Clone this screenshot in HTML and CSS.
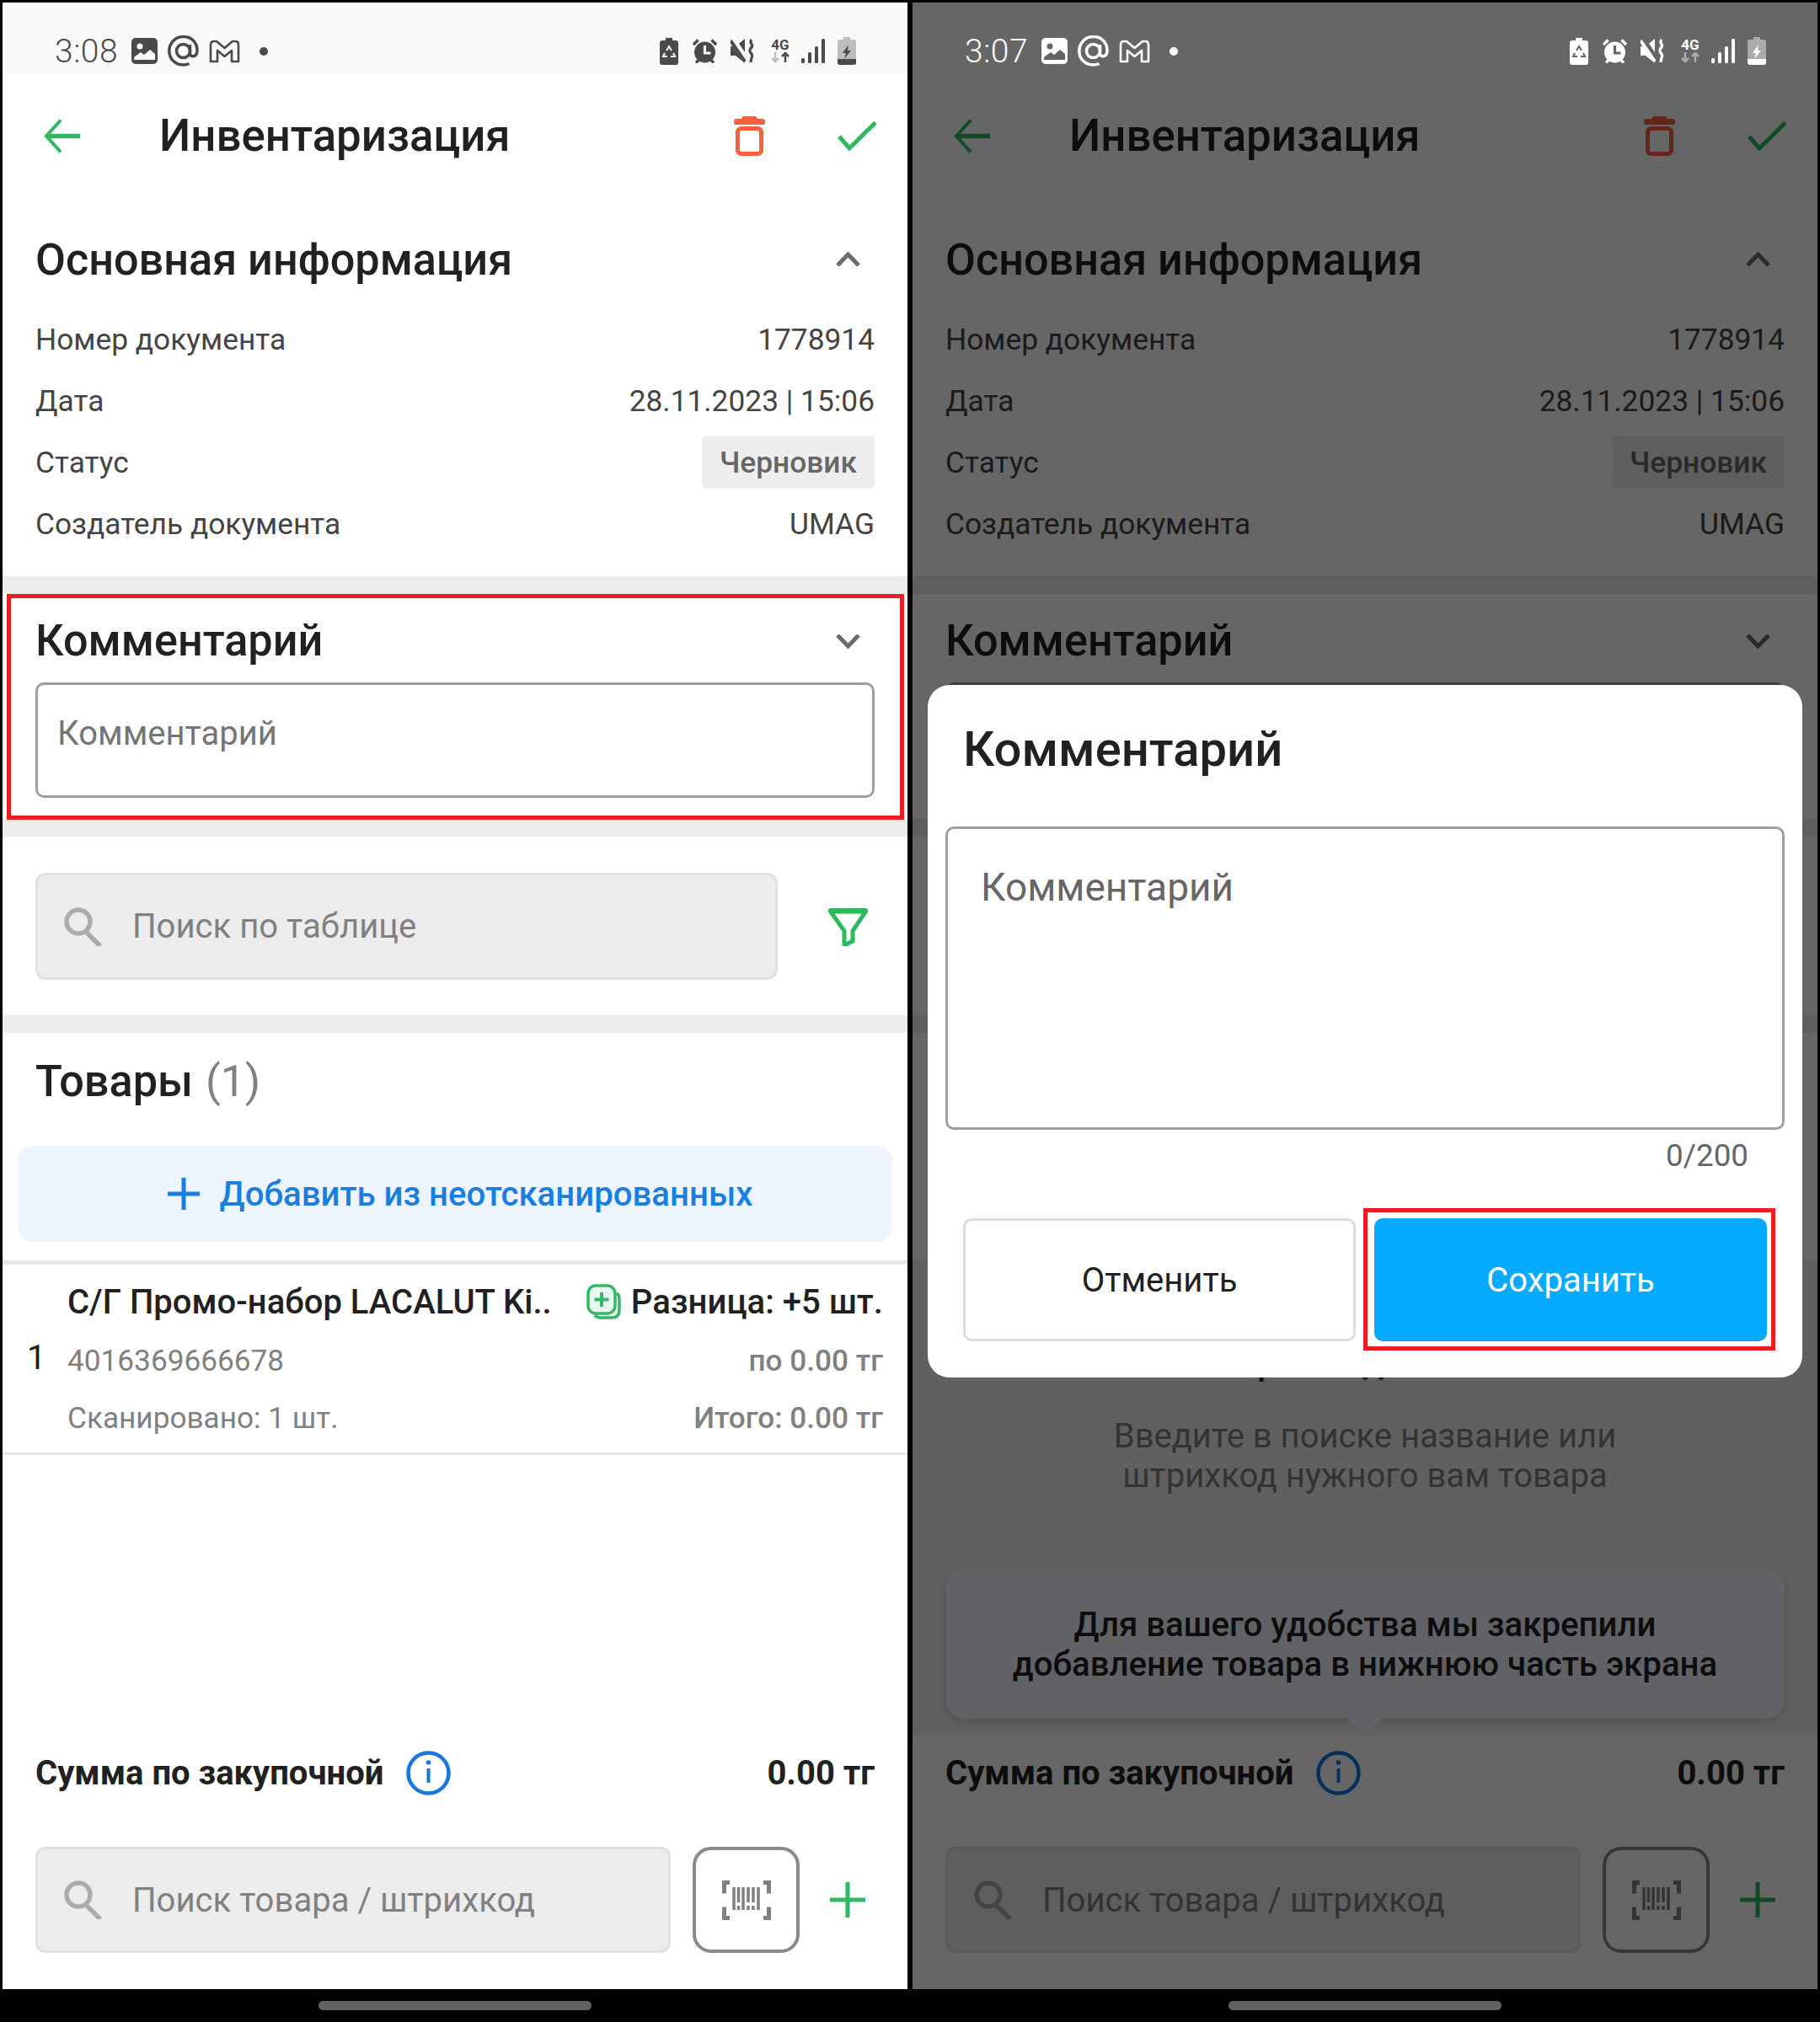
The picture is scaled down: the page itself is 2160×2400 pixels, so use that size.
FILE: index.html
```html
<!DOCTYPE html>
<html lang="ru">
<head>
<meta charset="utf-8">
<title>Инвентаризация</title>
<link rel="stylesheet" href="styles.css">
</head>
<body>
<main class="screens">

<section class="phone-wrap">
<div class="phone">
  <div class="status">
    <span class="time">3:08</span>
    <svg class="si" width="31" height="31" viewBox="0 0 31 31"><rect width="31" height="31" rx="5" fill="currentColor"/><circle cx="10" cy="10" r="3.5" fill="#fafafa"/><path d="M3 26v-3l8-6 4 3 7-6 6 5v7z" fill="#fafafa"/></svg>
    <svg class="si" width="37" height="37" viewBox="0 0 37 37" fill="none" stroke="currentColor" stroke-width="3.5"><circle cx="18.500" cy="18.500" r="8"/><path d="M26.500 11v10c0 6 8.500 5 8.500-3 0-10-7-16.500-16.500-16.500S1.800 9 1.800 18.500 9 35 18.500 35c3 0 5-.5 7-1.500"/></svg>
    <svg class="si" width="37" height="28" viewBox="0 0 37 28" fill="none" stroke="currentColor" stroke-width="2.600" stroke-linejoin="round"><path d="M2 6q0-4 4-4h3l9.500 8L28 2h3q4 0 4 4v20h-8V13l-8.500 7L10 13v13H2z"/></svg>
    <span class="sdot"></span>
    <div class="status-right">
      <svg width="22" height="32" viewBox="0 0 22 32"><path d="M7 0h8v3h4a3 3 0 0 1 3 3v23a3 3 0 0 1-3 3H3a3 3 0 0 1-3-3V6a3 3 0 0 1 3-3h4z" fill="currentColor"/><path d="M8 15l3-5 3 5M16 18l2 4h-5M9 22H4l2-4" fill="none" stroke="#fafafa" stroke-width="2"/></svg>
      <svg width="29" height="29" viewBox="0 0 29 29"><circle cx="14.500" cy="16" r="12.500" fill="currentColor"/><path d="M14.500 8v9h7" fill="none" stroke="#fafafa" stroke-width="3.200"/><path d="M1 7l5.500-5.500M28 7l-5.500-5.500M4 28.500l4-4M25 28.500l-4-4" stroke="currentColor" stroke-width="3.500"/></svg>
      <svg width="29" height="29" viewBox="0 0 29 29"><path d="M0 9h6L17 0v29L6 20H0z" fill="currentColor"/><path d="M2 1l17 25" stroke="#fafafa" stroke-width="8"/><path d="M0 2l17 25" stroke="currentColor" stroke-width="4"/><path d="M25 1c-4 4 3 6 0 9s-3 5 0 8c2 3-1 5-1 10" fill="none" stroke="currentColor" stroke-width="3.200"/></svg>
      <div class="net-icon"><span class="net">4G</span><svg width="24" height="15" viewBox="0 0 24 15"><path d="M6 2v11M2 9l4 4 4-4" fill="none" stroke="currentColor" stroke-opacity=".35" stroke-width="2.500"/><path d="M18 14V3M14 7l4-4 4 4" fill="none" stroke="currentColor" stroke-width="2.500"/></svg></div>
      <svg width="28" height="29" viewBox="0 0 28 29" fill="currentColor"><rect y="23" width="4" height="6" rx="1.500"/><rect x="8" y="16" width="4" height="13" rx="1.500"/><rect x="16" y="9" width="4" height="20" rx="1.500"/><rect x="24" width="4" height="29" rx="1.500"/></svg>
      <svg width="22" height="33" viewBox="0 0 22 33"><path d="M7 0h8v3h4a3 3 0 0 1 3 3v24a3 3 0 0 1-3 3H3a3 3 0 0 1-3-3V6a3 3 0 0 1 3-3h4z" fill="currentColor" fill-opacity=".35"/><path d="M0 26h22v4a3 3 0 0 1-3 3H3a3 3 0 0 1-3-3z" fill="currentColor"/><path d="M13 9L6 19h4l-2 7 8-10h-4z" fill="currentColor"/></svg>
    </div>
  </div>

  <header class="topbar">
    <svg class="back" width="43" height="41" viewBox="0 0 43 41" fill="none" stroke="#2dba5f"><path d="M4 20.500h39" stroke-width="5.500"/><path d="M20 1.500L3 20.500l17 19" stroke-width="4"/></svg>
    <h1 class="title">Инвентаризация</h1>
    <svg class="trash" width="37" height="47" viewBox="0 0 37 47" fill="#f85f3f"><path d="M11 0h15l2 3h6q3 0 3 3v2q0 2-2 2H2q-2 0-2-2V6q0-3 3-3h6z"/><rect x="4.500" y="14.500" width="28" height="30" rx="4" fill="none" stroke="#f85f3f" stroke-width="5"/></svg>
    <svg class="check" width="46" height="35" viewBox="0 0 46 35" fill="none" stroke="#2dba5f" stroke-width="5"><path d="M2 18l12 14L45 1.500"/></svg>
  </header>

  <section class="block block-info">
    <div class="block-head"><h2 class="h2">Основная информация</h2><svg class="chev chev-up" width="29" height="17" viewBox="0 0 29 17" fill="none" stroke="#6b6b6b" stroke-width="5"><path d="M2 16L14.500 3 27 16"/></svg></div>
    <div class="row"><span>Номер документа</span><span>1778914</span></div>
    <div class="row"><span>Дата</span><span>28.11.2023 | 15:06</span></div>
    <div class="row"><span>Статус</span><span class="chip">Черновик</span></div>
    <div class="row"><span>Создатель документа</span><span>UMAG</span></div>
  </section>
  <div class="band"></div>

  <section class="block block-comment">
    <div class="block-head block-head-c"><h2 class="h2">Комментарий</h2><svg class="chev" width="29" height="17" viewBox="0 0 29 17" fill="none" stroke="#6b6b6b" stroke-width="5"><path d="M2 1l12.500 13L27 1"/></svg></div>
    <div class="comment-input">Комментарий</div>
    <div class="mark mark-comment"></div>
  </section>
  <div class="band"></div>

  <section class="block block-search">
    <div class="search search-wide">
      <svg class="mag" width="46" height="46" viewBox="0 0 46 46" fill="none" stroke="#ababab" stroke-width="5.500"><circle cx="17" cy="17" r="14"/><path d="M26 29l17 17"/></svg>
      <span>Поиск по таблице</span>
    </div>
    <svg class="filter" width="47" height="45" viewBox="0 0 47 45" fill="none" stroke="#2dba5f" stroke-width="5" stroke-linejoin="round"><path d="M2 3h43L29 27v12l-10 5V27z"/><path d="M2 3h43" stroke-width="7"/></svg>
  </section>
  <div class="band"></div>

  <section class="goods">
    <h2 class="goods-title">Товары <span class="muted">(1)</span></h2>
    <div class="add-btn"><svg width="38" height="38" viewBox="0 0 38 38" stroke="#1a7de0" stroke-width="5"><path d="M19 0v38M0 19h38"/></svg><span>Добавить из неотсканированных</span></div>
  </section>
  <div class="line line-top"></div>

  <article class="item">
    <span class="num">1</span>
    <span class="name">С/Г Промо-набор LACALUT Ki..</span>
    <span class="diff"><svg width="41" height="42" viewBox="0 0 41 42" fill="none" stroke="#34b868" stroke-width="3.500"><path d="M10 37q2 3 7 3h13q9 0 9-9V18q0-5-3-7"/><rect x="2" y="2" width="32" height="33" rx="9" fill="#e8f8ef"/><path d="M18 10v17M9.500 18.500h17" stroke-width="4"/></svg>Разница: +5 шт.</span>
    <span class="sub">4016369666678</span>
    <span class="sub sub-strong">по 0.00 тг</span>
    <span class="sub">Сканировано: 1 шт.</span>
    <span class="sub sub-strong">Итого: 0.00 тг</span>
  </article>
  <div class="line"></div>

  <div class="spacer"></div>

  <footer class="bottom">
    <div class="sum"><span class="sum-label">Сумма по закупочной</span><svg class="info" width="53" height="53" viewBox="0 0 53 53" fill="none" stroke="#1677e0"><circle cx="26.500" cy="26.500" r="24" stroke-width="4.500"/><circle cx="26.500" cy="14" r="2.800" fill="#1677e0" stroke="none"/><path d="M26.500 21v17" stroke-width="4"/></svg><span class="sum-value">0.00 тг</span></div>
    <div class="tools">
      <div class="search search-bottom">
        <svg class="mag" width="46" height="46" viewBox="0 0 46 46" fill="none" stroke="#ababab" stroke-width="5.500"><circle cx="17" cy="17" r="14"/><path d="M26 29l17 17"/></svg>
        <span>Поиск товара / штрихкод</span>
      </div>
      <div class="scan"><svg width="58" height="47" viewBox="0 0 58 47" fill="none" stroke="#808080"><path d="M9 2.500H2.500v13M49 2.500h6.500v13M9 44.500H2.500v-13M49 44.500h6.500v-13" stroke-width="5"/><path d="M14 8v27M19.500 8v18M19.500 30v5M25 8v27M31 8v18M31 30v5M37 8v18M37 30v5M43 8v27" stroke-width="3.500"/></svg></div>
      <svg class="plus" width="42" height="42" viewBox="0 0 42 42" stroke="#2dba5f" stroke-width="5"><path d="M21 0v42M0 21h42"/></svg>
    </div>
  </footer>
</div>
</section>

<section class="phone-wrap">
<div class="phone phone-dim">
  <div class="status">
    <span class="time">3:07</span>
    <svg class="si" width="31" height="31" viewBox="0 0 31 31"><rect width="31" height="31" rx="5" fill="currentColor"/><circle cx="10" cy="10" r="3.500" fill="#646464"/><path d="M3 26v-3l8-6 4 3 7-6 6 5v7z" fill="#646464"/></svg>
    <svg class="si" width="37" height="37" viewBox="0 0 37 37" fill="none" stroke="currentColor" stroke-width="3.500"><circle cx="18.500" cy="18.500" r="8"/><path d="M26.500 11v10c0 6 8.500 5 8.500-3 0-10-7-16.500-16.500-16.500S1.800 9 1.800 18.500 9 35 18.500 35c3 0 5-.5 7-1.500"/></svg>
    <svg class="si" width="37" height="28" viewBox="0 0 37 28" fill="none" stroke="currentColor" stroke-width="2.600" stroke-linejoin="round"><path d="M2 6q0-4 4-4h3l9.500 8L28 2h3q4 0 4 4v20h-8V13l-8.500 7L10 13v13H2z"/></svg>
    <span class="sdot"></span>
    <div class="status-right">
      <svg width="22" height="32" viewBox="0 0 22 32"><path d="M7 0h8v3h4a3 3 0 0 1 3 3v23a3 3 0 0 1-3 3H3a3 3 0 0 1-3-3V6a3 3 0 0 1 3-3h4z" fill="currentColor"/><path d="M8 15l3-5 3 5M16 18l2 4h-5M9 22H4l2-4" fill="none" stroke="#646464" stroke-width="2"/></svg>
      <svg width="29" height="29" viewBox="0 0 29 29"><circle cx="14.500" cy="16" r="12.500" fill="currentColor"/><path d="M14.500 8v9h7" fill="none" stroke="#646464" stroke-width="3.200"/><path d="M1 7l5.500-5.500M28 7l-5.500-5.500M4 28.500l4-4M25 28.500l-4-4" stroke="currentColor" stroke-width="3.500"/></svg>
      <svg width="29" height="29" viewBox="0 0 29 29"><path d="M0 9h6L17 0v29L6 20H0z" fill="currentColor"/><path d="M2 1l17 25" stroke="#646464" stroke-width="8"/><path d="M0 2l17 25" stroke="currentColor" stroke-width="4"/><path d="M25 1c-4 4 3 6 0 9s-3 5 0 8c2 3-1 5-1 10" fill="none" stroke="currentColor" stroke-width="3.200"/></svg>
      <div class="net-icon"><span class="net">4G</span><svg width="24" height="15" viewBox="0 0 24 15"><path d="M6 2v11M2 9l4 4 4-4" fill="none" stroke="currentColor" stroke-opacity=".45" stroke-width="2.500"/><path d="M18 14V3M14 7l4-4 4 4" fill="none" stroke="currentColor" stroke-opacity=".45" stroke-width="2.500"/></svg></div>
      <svg width="28" height="29" viewBox="0 0 28 29" fill="currentColor"><rect y="23" width="4" height="6" rx="1.500"/><rect x="8" y="16" width="4" height="13" rx="1.500"/><rect x="16" y="9" width="4" height="20" rx="1.500"/><rect x="24" width="4" height="29" rx="1.500"/></svg>
      <svg width="22" height="33" viewBox="0 0 22 33"><path d="M7 0h8v3h4a3 3 0 0 1 3 3v24a3 3 0 0 1-3 3H3a3 3 0 0 1-3-3V6a3 3 0 0 1 3-3h4z" fill="currentColor" fill-opacity=".45"/><path d="M0 26h22v4a3 3 0 0 1-3 3H3a3 3 0 0 1-3-3z" fill="currentColor"/><path d="M13 9L6 19h4l-2 7 8-10h-4z" fill="#fff"/></svg>
    </div>
  </div>

  <header class="topbar">
    <svg class="back" width="43" height="41" viewBox="0 0 43 41" fill="none" stroke="#2dba5f"><path d="M4 20.500h39" stroke-width="5.500"/><path d="M20 1.500L3 20.500l17 19" stroke-width="4"/></svg>
    <h1 class="title">Инвентаризация</h1>
    <svg class="trash" width="37" height="47" viewBox="0 0 37 47" fill="#f85f3f"><path d="M11 0h15l2 3h6q3 0 3 3v2q0 2-2 2H2q-2 0-2-2V6q0-3 3-3h6z"/><rect x="4.500" y="14.500" width="28" height="30" rx="4" fill="none" stroke="#f85f3f" stroke-width="5"/></svg>
    <svg class="check" width="46" height="35" viewBox="0 0 46 35" fill="none" stroke="#2dba5f" stroke-width="5"><path d="M2 18l12 14L45 1.500"/></svg>
  </header>

  <section class="block block-info">
    <div class="block-head"><h2 class="h2">Основная информация</h2><svg class="chev chev-up" width="29" height="17" viewBox="0 0 29 17" fill="none" stroke="#6b6b6b" stroke-width="5"><path d="M2 16L14.500 3 27 16"/></svg></div>
    <div class="row"><span>Номер документа</span><span>1778914</span></div>
    <div class="row"><span>Дата</span><span>28.11.2023 | 15:06</span></div>
    <div class="row"><span>Статус</span><span class="chip">Черновик</span></div>
    <div class="row"><span>Создатель документа</span><span>UMAG</span></div>
  </section>
  <div class="band"></div>

  <section class="block block-comment">
    <div class="block-head block-head-c"><h2 class="h2">Комментарий</h2><svg class="chev" width="29" height="17" viewBox="0 0 29 17" fill="none" stroke="#6b6b6b" stroke-width="5"><path d="M2 1l12.500 13L27 1"/></svg></div>
    <div class="comment-input"></div>
  </section>
  <div class="band"></div>

  <section class="block block-search"></section>
  <div class="band"></div>

  <section class="goods"></section>

  <div class="empty">
    <h3 class="empty-title">Товары не добавлены</h3>
    <p class="empty-text">Введите в поиске название или<br>штрихкод нужного вам товара</p>
    <div class="tip">Для вашего удобства мы закрепили<br>добавление товара в нижнюю часть экрана</div>
  </div>

  <footer class="bottom">
    <div class="sum"><span class="sum-label">Сумма по закупочной</span><svg class="info" width="53" height="53" viewBox="0 0 53 53" fill="none" stroke="#1677e0"><circle cx="26.500" cy="26.500" r="24" stroke-width="4.500"/><circle cx="26.500" cy="14" r="2.800" fill="#1677e0" stroke="none"/><path d="M26.500 21v17" stroke-width="4"/></svg><span class="sum-value">0.00 тг</span></div>
    <div class="tools">
      <div class="search search-bottom">
        <svg class="mag" width="46" height="46" viewBox="0 0 46 46" fill="none" stroke="#ababab" stroke-width="5.500"><circle cx="17" cy="17" r="14"/><path d="M26 29l17 17"/></svg>
        <span>Поиск товара / штрихкод</span>
      </div>
      <div class="scan"><svg width="58" height="47" viewBox="0 0 58 47" fill="none" stroke="#808080"><path d="M9 2.500H2.500v13M49 2.500h6.500v13M9 44.500H2.500v-13M49 44.500h6.500v-13" stroke-width="5"/><path d="M14 8v27M19.500 8v18M19.500 30v5M25 8v27M31 8v18M31 30v5M37 8v18M37 30v5M43 8v27" stroke-width="3.500"/></svg></div>
      <svg class="plus" width="42" height="42" viewBox="0 0 42 42" stroke="#2dba5f" stroke-width="5"><path d="M21 0v42M0 21h42"/></svg>
    </div>
  </footer>

  <div class="scrim"></div>

  <div class="modal">
    <h2 class="modal-title">Комментарий</h2>
    <div class="modal-input">Комментарий</div>
    <div class="counter">0/200</div>
    <div class="modal-actions">
      <div class="btn btn-cancel">Отменить</div>
      <div class="btn btn-save">Сохранить<span class="mark mark-save"></span></div>
    </div>
  </div>
</div>
</section>

</main>
<div class="navs"><span class="pill"></span><span class="pill"></span></div>
</body>
</html>
```

FILE: styles.css
```css
* { box-sizing: border-box; }
html, body { margin: 0; padding: 0; }
body {
  width: 2160px;
  height: 2400px;
  background: #000;
  font-family: Roboto, "Noto Sans", sans-serif;
  color: #212121;
  overflow: hidden;
}
.screens {
  display: grid;
  grid-template-columns: 1074px 1074px;
  gap: 6px;
  padding: 3px 3px 0;
}
.phone {
  position: relative;
  height: 2358px;
  background: #fff;
  display: flex;
  flex-direction: column;
  overflow: hidden;
}
h1, h2, h3, p { margin: 0; }

/* status bar */
.status {
  flex: none;
  height: 85px;
  background: #fafafa;
  color: #4a4a4a;
  display: flex;
  align-items: center;
  padding: 30px 61px 0 62px;
  gap: 12px;
}
.time { font-size: 39px; font-weight: 300; letter-spacing: 0.5px; margin-right: 4px; color: #4a4a4a; }
.si { flex: none; }
.sdot { width: 10px; height: 10px; border-radius: 50%; background: currentColor; margin-left: 11px; }
.status-right { margin-left: auto; display: flex; align-items: center; }
.status-right > :nth-child(2) { margin-left: 17px; }
.status-right > :nth-child(3) { margin-left: 16px; }
.status-right > :nth-child(4) { margin-left: 18px; }
.status-right > :nth-child(5) { margin-left: 13px; }
.status-right > :nth-child(6) { margin-left: 15px; }
.net-icon { width: 24px; height: 29px; display: flex; flex-direction: column; align-items: center; }
.net { font-size: 17px; font-weight: 700; line-height: 14px; height: 14px; }

/* top bar */
.topbar {
  flex: none;
  height: 146px;
  display: flex;
  align-items: center;
  padding: 0 37px 0 49px;
}
.title { font-size: 52.8px; font-weight: 500; margin-left: 94px; line-height: 62px; color: #212121; }
.trash { margin-left: auto; }
.check { margin-left: 86px; }

/* info */
.block { padding: 0 39px; }
.block-info { height: 450px; padding-top: 34px; }
.block-head { height: 82px; display: flex; align-items: center; justify-content: space-between; margin-bottom: 16px; }
.block-head .chev { margin-right: 17px; }
.block-head .chev-up { margin-bottom: 3px; }
.h2 { font-size: 52.2px; font-weight: 500; line-height: 62px; }
.row { height: 73px; display: flex; align-items: center; justify-content: space-between; font-size: 35.3px; color: #444; }
.chip {
  height: 63px; padding: 0 21px; display: flex; align-items: center;
  background: #eee; border-radius: 6px; font-weight: 500; color: #666;
}
.band { flex: none; height: 21px; background: #ececec; }

/* comment */
.block-comment { position: relative; height: 267px; padding-top: 15px; }
.block-head-c { margin-bottom: 8px; }
.comment-input {
  height: 137px;
  border: 3px solid #9e9e9e;
  border-radius: 10px;
  padding: 33px 23px;
  font-size: 40px;
  line-height: 50px;
  color: #757575;
}
.mark { position: absolute; border: 5px solid #ed1c24; pointer-events: none; }
.mark-comment { left: 5px; right: 4px; top: 0; bottom: -1px; }

/* search */
.block-search { height: 212px; padding-top: 43px; display: flex; align-items: flex-start; }
.search {
  height: 127px;
  background: #ececec;
  border: 3px solid #e0e0e0;
  border-radius: 12px;
  display: flex;
  align-items: center;
  padding-left: 31px;
  font-size: 40.1px;
  color: #808080;
}
.search .mag { margin-right: 35px; flex: none; }
.search-wide { width: 881px; }
.filter { margin: 42px 0 0 60px; }

/* goods */
.goods { flex: none; height: 270px; padding: 0 18px; position: relative; }
.goods-title { height: 134px; padding: 27px 0 0 21px; font-size: 52.2px; font-weight: 500; line-height: 62px; }
.muted { color: #808080; font-weight: 400; margin-left: 2px; }
.add-btn {
  height: 114px;
  background: #edf4fd;
  border-radius: 18px;
  display: flex;
  align-items: center;
  justify-content: center;
  gap: 24px;
  padding-left: 12px;
  font-size: 40.2px;
  font-weight: 500;
  color: #1a7de0;
}
.line { flex: none; height: 3px; background: #e6e6e6; }
.line-top { height: 5px; }

/* product */
.item {
  flex: none;
  height: 223px;
  padding: 9px 29px 8px 77px;
  position: relative;
  display: grid;
  grid-template-columns: 1fr auto;
  grid-template-rows: 70px 70px 66px;
  align-items: center;
}
.num { position: absolute; left: 29px; top: 88px; font-size: 40px; line-height: 46px; }
.name { font-size: 40px; font-weight: 500; white-space: nowrap; }
.diff { font-size: 40.2px; font-weight: 500; display: flex; align-items: center; gap: 12px; }
.sub { font-size: 35.2px; color: #808080; }
.sub-strong { font-weight: 500; text-align: right; }

.spacer { flex: 1; }

/* bottom */
.bottom { flex: none; height: 302px; padding: 13px 39px 43px; display: flex; flex-direction: column; }
.sum { height: 64px; display: flex; align-items: center; margin-bottom: 56px; }
.sum-label { font-size: 40px; font-weight: 700; }
.info { margin-left: 27px; }
.sum-value { margin-left: auto; font-size: 40px; font-weight: 700; }
.tools { display: flex; align-items: center; height: 126px; }
.search-bottom { width: 754px; height: 126px; }
.scan {
  width: 127px; height: 126px; margin-left: 26px;
  border: 4px solid #8a8a8a; border-radius: 22px;
  display: flex; align-items: center; justify-content: center;
}
.plus { margin-left: 36px; }

/* dim phone */
.phone-dim .status { background: transparent; color: #fff; position: relative; z-index: 3; }
.phone-dim .time { color: #fff; }
.empty {
  flex: 1;
  background: #f0f0f0;
  display: flex;
  flex-direction: column;
  align-items: center;
  padding: 0 39px 19px;
  text-align: center;
}
.empty-title { font-size: 42px; font-weight: 500; line-height: 50px; margin-top: 96px; color: #333; }
.empty-text { font-size: 40px; line-height: 47px; color: #808080; margin-top: 39px; }
.tip {
  margin-top: auto;
  width: 100%;
  height: 177px;
  background: #f2f5ff;
  border-radius: 24px;
  box-shadow: 0 4px 10px rgba(0,0,0,.15);
  display: flex;
  align-items: center;
  justify-content: center;
  font-size: 40.2px;
  font-weight: 500;
  line-height: 47px;
  position: relative;
  color: #222;
}
.tip::after {
  content: "";
  position: absolute;
  left: 50%;
  bottom: -13px;
  width: 32px;
  height: 32px;
  margin-left: -16px;
  background: #f2f5ff;
  border-radius: 6px;
  transform: rotate(45deg);
}
.scrim { position: absolute; inset: 0; background: rgba(0,0,0,.6); z-index: 1; }

/* modal */
.modal {
  position: absolute;
  z-index: 2;
  left: 18px;
  top: 810px;
  width: 1038px;
  height: 822px;
  background: #fff;
  border-radius: 26px;
  padding: 0 21px;
}
.modal-title { height: 168px; padding: 45px 0 0 21px; font-size: 58px; font-weight: 500; line-height: 62px; }
.modal-input {
  height: 360px;
  border: 3px solid #a0a0a0;
  border-radius: 10px;
  padding: 40px 39px;
  font-size: 46px;
  line-height: 58px;
  color: #666;
}
.counter { text-align: right; padding-right: 43px; font-size: 36.8px; line-height: 44px; margin-top: 9px; color: #666; height: 96px; }
.modal-actions { display: flex; gap: 22px; padding: 0 21px; }
.btn {
  position: relative;
  width: 466px;
  height: 146px;
  border-radius: 10px;
  display: flex;
  align-items: center;
  justify-content: center;
  font-size: 40px;
}
.btn-cancel { border: 3px solid #ddd; color: #212121; }
.btn-save { background: #06aaff; color: #fff; }
.mark-save { left: -13px; right: -10px; top: -12px; bottom: -11px; }

/* nav */
.navs {
  display: grid;
  grid-template-columns: 1074px 1074px;
  gap: 6px;
  padding: 14px 3px 0;
  justify-items: center;
}
.pill { width: 324px; height: 11px; border-radius: 6px; background: #616161; }
```
